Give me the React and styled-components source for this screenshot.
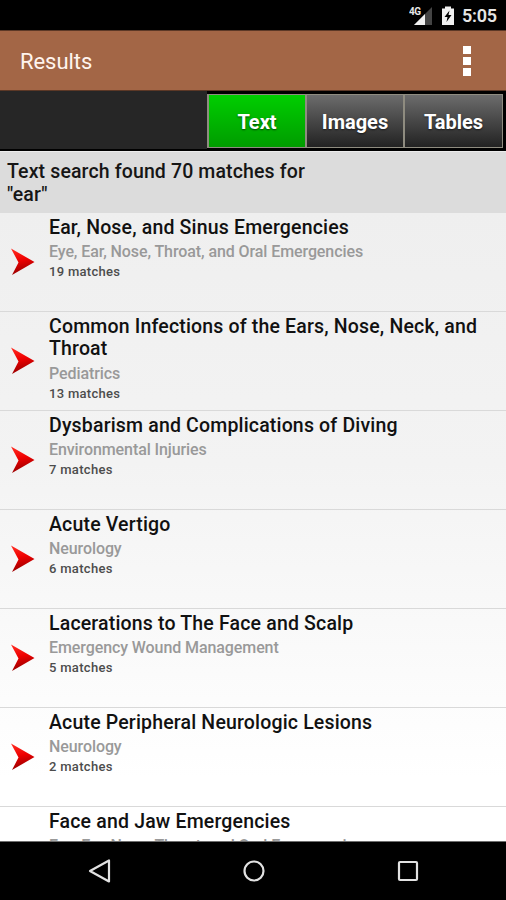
import React from "react";
import styled, { createGlobalStyle } from "styled-components";

const GlobalStyle = createGlobalStyle`
  * {
    box-sizing: border-box;
  }
  body {
    margin: 0;
    background-color: black;
    font-family: Roboto, sans-serif;
  }
`;

const Screen = styled.div`
  width: 506px;
  height: 900px;
  display: flex;
  flex-direction: column;
  overflow: hidden;
  background-color: black;
`;

//Status bar
const StatusBar = styled.div`
  height: 30px;
  flex-shrink: 0;
  display: flex;
  justify-content: flex-end;
  align-items: center;
  padding-right: 9px;
  color: #e6e6e6;
`;

const Signal = styled.svg`
  display: block;
  margin-right: 8px;
`;

const Battery = styled.svg`
  display: block;
  margin-right: 7px;
`;

const Clock = styled.div`
  width: 35px;
  font-size: 18px;
  font-weight: 600;
  line-height: 30px;
  letter-spacing: -0.2px;
  white-space: nowrap;
  padding-top: 2px;
`;

//Header
const Header = styled.header`
  height: 61px;
  flex-shrink: 0;
  display: flex;
  justify-content: space-between;
  align-items: center;
  padding: 0 35px 0 20px;
  background-color: #a36646;
  border-top: 1px solid #5c3826;
  border-bottom: 1px solid #5c3826;
`;

const HeaderTitle = styled.div`
  color: #fff4ee;
  font-size: 22px;
  line-height: 26px;
  letter-spacing: -0.05px;
  padding-top: 3px;
`;

const Menu = styled.div`
  display: flex;
  flex-direction: column;
  gap: 3px;
`;

const Dot = styled.div`
  width: 8px;
  height: 8px;
  background-color: white;
`;

//Tabs
const Tabs = styled.nav`
  height: 60px;
  flex-shrink: 0;
  display: flex;
  justify-content: flex-end;
  background-color: #262626;
  border-bottom: 2px solid black;
`;

const TabGroup = styled.div`
  display: flex;
  padding: 3px 3px 1px 0;
  background-color: black;
`;

const TabFrame = styled.div`
  display: flex;
  gap: 2px;
  padding: 1px 1px 1px 2px;
  background-color: #8f8c80;
`;

const Tab = styled.div`
  width: ${(props) => props.$width}px;
  display: flex;
  justify-content: center;
  align-items: center;
  padding-top: 2px;
  color: white;
  font-size: 20px;
  font-weight: 700;
  text-shadow: 0 1px 2px rgba(0, 0, 0, 0.6);
  background: ${(props) =>
    props.$current
      ? "linear-gradient(#00ce00, #009c00)"
      : "linear-gradient(#6c6c6c, #222222)"};
`;

//Search summary
const Summary = styled.div`
  height: 62px;
  flex-shrink: 0;
  padding: 8px 180px 0 7px;
  color: #161616;
  background-color: #dcdcdc;
  border-top: 1px solid #ececec;
  font-size: 19.5px;
  font-weight: 500;
  line-height: 23px;
  letter-spacing: 0.13px;
`;

//Results
const List = styled.div`
  height: 629px;
  flex-shrink: 0;
  overflow: hidden;
  background: linear-gradient(#efefef, #f3f3f3 40%, #ffffff 90%);
  border-bottom: 1px solid #6e6e6e;
`;

const Row = styled.div`
  height: 99px;
  display: flex;
  border-bottom: 1px solid #d9d9d9;
`;

const ArrowBox = styled.div`
  width: 49px;
  display: flex;
  align-items: center;
  padding-left: 10px;
`;

const Details = styled.div`
  flex: 1;
  padding: 4px 20px 0 0;
  white-space: nowrap;
`;

const Title = styled.div`
  color: #111111;
  font-size: 19.5px;
  font-weight: 500;
  line-height: 22.4px;
  letter-spacing: 0.17px;
  white-space: pre-line;
`;

const Section = styled.div`
  margin-top: 3px;
  color: #999999;
  font-size: 16px;
  font-weight: 500;
  line-height: 20px;
  letter-spacing: -0.09px;
`;

const Matches = styled.div`
  color: #4c4c4c;
  font-size: 13px;
  font-weight: 500;
  line-height: 20px;
  letter-spacing: 0.3px;
`;

//Bottom navigation
const NavBar = styled.div`
  flex: 1;
  display: flex;
  justify-content: center;
  align-items: center;
  gap: 130px;
  padding-left: 1px;
  background-color: black;
`;

const NavIcon = styled.svg`
  display: block;
  fill: none;
  stroke: #e2e2e2;
  stroke-width: 2.2;
  stroke-linejoin: round;
`;

const results = [
  {
    title: "Ear, Nose, and Sinus Emergencies",
    section: "Eye, Ear, Nose, Throat, and Oral Emergencies",
    matches: 19,
  },
  {
    title: "Common Infections of the Ears, Nose, Neck, and\nThroat",
    section: "Pediatrics",
    matches: 13,
  },
  {
    title: "Dysbarism and Complications of Diving",
    section: "Environmental Injuries",
    matches: 7,
  },
  { title: "Acute Vertigo", section: "Neurology", matches: 6 },
  {
    title: "Lacerations to The Face and Scalp",
    section: "Emergency Wound Management",
    matches: 5,
  },
  {
    title: "Acute Peripheral Neurologic Lesions",
    section: "Neurology",
    matches: 2,
  },
  {
    title: "Face and Jaw Emergencies",
    section: "Eye, Ear, Nose, Throat, and Oral Emergencies",
  },
];

const Arrow = () => (
  <svg width="26" height="28" viewBox="0 0 26 28">
    <defs>
      <linearGradient id="arrow" x1="0.3" y1="0" x2="0.5" y2="1">
        <stop offset="0" stopColor="#ff2a20" />
        <stop offset="0.45" stopColor="#ee0000" />
        <stop offset="1" stopColor="#8c0000" />
      </linearGradient>
    </defs>
    <path d="M1 0.5 L24.5 14 L2 27 L8.5 14.5 Z" fill="url(#arrow)" />
  </svg>
);

export default () => (
  <>
    <GlobalStyle />
    <Screen>
      <StatusBar>
        <Signal width="24" height="20" viewBox="0 0 24 20">
          <path d="M23 2 V20 H5 Z" fill="#444444" />
          <path d="M16 9 V20 H5 Z" fill="#f0f0f0" />
          <text
            x="0"
            y="10"
            fill="#e6e6e6"
            stroke="black"
            strokeWidth="2"
            paintOrder="stroke"
            fontSize="10"
            fontWeight="700"
            letterSpacing="-0.5"
          >
            4G
          </text>
        </Signal>
        <Battery width="14" height="20" viewBox="0 0 14 20">
          <path d="M1 3.5 H4 V1.5 H10 V3.5 H13 V20 H1 Z" fill="#f0f0f0" />
          <path d="M8.5 5.5 L3.5 12 H6.5 L5.5 17 L10.5 10 H7.5 Z" fill="black" />
        </Battery>
        <Clock>5:05</Clock>
      </StatusBar>
      <Header>
        <HeaderTitle>Results</HeaderTitle>
        <Menu>
          <Dot />
          <Dot />
          <Dot />
        </Menu>
      </Header>
      <Tabs>
        <TabGroup>
          <TabFrame>
            <Tab $width={96} $current>
              Text
            </Tab>
            <Tab $width={96}>Images</Tab>
            <Tab $width={97}>Tables</Tab>
          </TabFrame>
        </TabGroup>
      </Tabs>
      <Summary>Text search found 70 matches for "ear"</Summary>
      <List>
        {results.map((result) => (
          <Row key={result.title}>
            <ArrowBox>
              <Arrow />
            </ArrowBox>
            <Details>
              <Title>{result.title}</Title>
              <Section>{result.section}</Section>
              {result.matches && <Matches>{result.matches} matches</Matches>}
            </Details>
          </Row>
        ))}
      </List>
      <NavBar>
        <NavIcon width="24" height="26" viewBox="0 0 24 26">
          <path d="M2 13 L21 2.5 V23.5 Z" />
        </NavIcon>
        <NavIcon width="24" height="26" viewBox="0 0 24 26">
          <circle cx="12" cy="13" r="9.5" />
        </NavIcon>
        <NavIcon width="24" height="26" viewBox="0 0 24 26">
          <rect x="3" y="4" width="18" height="18" rx="1" />
        </NavIcon>
      </NavBar>
    </Screen>
  </>
);
